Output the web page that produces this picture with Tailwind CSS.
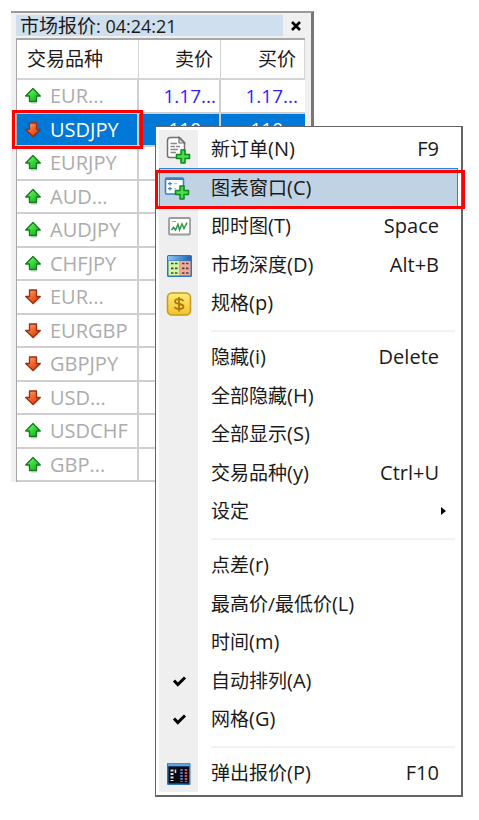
<!DOCTYPE html>
<html lang="zh-CN">
<head>
    <meta charset="UTF-8">
    <meta name="viewport" content="width=device-width, initial-scale=1.0">
    <title>市场报价</title>
    <script src="https://cdn.jsdelivr.net/npm/@tailwindcss/browser@4"></script>
</head>
<body class="relative min-h-screen bg-white font-['Open_Sans','Noto_Sans_CJK_SC',sans-serif] text-[19px] leading-6 text-[#1a1a1a]">
    <!-- 图标 -->
    <svg class="absolute size-0" aria-hidden="true">
        <defs>
            <linearGradient id="green" x1="0" y1="0" x2="1" y2="1">
                <stop offset="0" stop-color="#9df58c"/>
                <stop offset="0.5" stop-color="#35d63a"/>
                <stop offset="1" stop-color="#0fa51c"/>
            </linearGradient>
            <linearGradient id="red" x1="0" y1="0" x2="1" y2="1">
                <stop offset="0" stop-color="#ffb28a"/>
                <stop offset="0.5" stop-color="#f4602a"/>
                <stop offset="1" stop-color="#c93a0c"/>
            </linearGradient>
            <linearGradient id="gold" x1="0" y1="0" x2="0" y2="1">
                <stop offset="0" stop-color="#ffec78"/>
                <stop offset="1" stop-color="#f2c230"/>
            </linearGradient>
            <linearGradient id="blue" x1="0" y1="0" x2="1" y2="0">
                <stop offset="0" stop-color="#8cc4f0"/>
                <stop offset="1" stop-color="#1c62ae"/>
            </linearGradient>
        </defs>
        <symbol id="up" viewBox="0 0 18 18">
            <path d="M3 11 9.800 4 17 11.500H13V17H7V12Z" fill="#000" opacity=".12"/>
            <path d="M9 1.500 16.300 9H12.500V14.500H5.500V9H1.700Z" fill="url(#green)" stroke="#167a1c" stroke-width="1.300" stroke-linejoin="round"/>
        </symbol>
        <symbol id="down" viewBox="0 0 18 18">
            <path d="M7 4H13V9H17L10 17 4 10Z" fill="#000" opacity=".12"/>
            <path d="M9 15.500 1.700 8.500H5.500V2H12.500V8.500H16.300Z" fill="url(#red)" stroke="#96300f" stroke-width="1.300" stroke-linejoin="round"/>
        </symbol>
        <symbol id="plus" viewBox="0 0 14 14">
            <path d="M5 1H9V5H13V9H9V13H5V9H1V5H5Z" fill="#43e04a" stroke="#11861b" stroke-width="1.500" stroke-linejoin="round"/>
        </symbol>
        <symbol id="check" viewBox="0 0 30 30">
            <path d="M10 14.500 13.800 18.500 21 11.500" fill="none" stroke="#000" stroke-width="3"/>
        </symbol>
    </svg>

    <!-- 市场报价 -->
    <section class="mr-[165px] ml-[11px] pt-[11px]">
        <div class="border-t-2 border-r-3 border-t-[#9a9a9a] border-r-[#777] bg-[#f0f0f0] pt-[2px] pr-[6px]">
            <header class="ml-[5px] flex h-[23px] items-start">
                <h1 class="h-[21px] grow bg-[#d0dfee] pl-1 text-lg leading-[22px]"><span class="text-[19px]">市场报价</span>: 04:24:21</h1>
                <button class="flex h-[21px] w-[22px] items-center justify-end pr-1" aria-label="关闭">
                    <svg class="size-[10px]" viewBox="0 0 10 10"><path d="M1 1 9 9M9 1 1 9" stroke="#000" stroke-width="2.600"/></svg>
                </button>
            </header>
            <table class="ml-[5px] w-[calc(100%-5px)] table-fixed border-separate border-spacing-0 border-t-2 border-l-1 border-[#a8a8a8] bg-white">
                <thead>
                    <tr class="h-[40px] *:border-r *:border-b-2 *:border-[#d4d4d4] *:p-0 *:font-normal">
                        <th class="w-[122px] text-left"><span class="pl-[10px]">交易品种</span></th>
                        <th class="w-[82px] text-right"><span class="pr-[7px]">卖价</span></th>
                        <th class="text-right"><span class="pr-2">买价</span></th>
                    </tr>
                </thead>
                <tbody class="text-xl text-[#acacac] *:odd:h-[34px] *:even:h-[33px] [&_td]:border-r-2 [&_td]:border-b-2 [&_td]:border-[#cfcfcf] [&_td]:p-0 [&_td:last-child]:border-r-0">
                    <tr>
                        <td><div class="flex items-center gap-2 pl-[7px]"><svg class="size-[18px]"><use href="#up"/></svg>EUR...</div></td>
                        <td class="text-right text-[19px] font-medium text-[#2d1fff]"><span class="pr-[3px]">1.17...</span></td>
                        <td class="text-right text-[19px] font-medium text-[#2d1fff]"><span class="pr-[7px]">1.17...</span></td>
                    </tr>
                    <tr class="bg-[#0078d7] text-white">
                        <td><div class="flex items-center gap-2 pl-[7px]"><svg class="size-[18px]"><use href="#down"/></svg>USDJPY</div></td>
                        <td class="text-right text-[19px] font-medium"><span class="pr-[3px]">110...</span></td>
                        <td class="text-right text-[19px] font-medium"><span class="pr-[7px]">110...</span></td>
                    </tr>
                    <tr>
                        <td><div class="flex items-center gap-2 pl-[7px]"><svg class="size-[18px]"><use href="#up"/></svg>EURJPY</div></td>
                        <td></td>
                        <td></td>
                    </tr>
                    <tr>
                        <td><div class="flex items-center gap-2 pl-[7px]"><svg class="size-[18px]"><use href="#up"/></svg>AUD...</div></td>
                        <td></td>
                        <td></td>
                    </tr>
                    <tr>
                        <td><div class="flex items-center gap-2 pl-[7px]"><svg class="size-[18px]"><use href="#up"/></svg>AUDJPY</div></td>
                        <td></td>
                        <td></td>
                    </tr>
                    <tr>
                        <td><div class="flex items-center gap-2 pl-[7px]"><svg class="size-[18px]"><use href="#up"/></svg>CHFJPY</div></td>
                        <td></td>
                        <td></td>
                    </tr>
                    <tr>
                        <td><div class="flex items-center gap-2 pl-[7px]"><svg class="size-[18px]"><use href="#down"/></svg>EUR...</div></td>
                        <td></td>
                        <td></td>
                    </tr>
                    <tr>
                        <td><div class="flex items-center gap-2 pl-[7px]"><svg class="size-[18px]"><use href="#down"/></svg>EURGBP</div></td>
                        <td></td>
                        <td></td>
                    </tr>
                    <tr>
                        <td><div class="flex items-center gap-2 pl-[7px]"><svg class="size-[18px]"><use href="#down"/></svg>GBPJPY</div></td>
                        <td></td>
                        <td></td>
                    </tr>
                    <tr>
                        <td><div class="flex items-center gap-2 pl-[7px]"><svg class="size-[18px]"><use href="#down"/></svg>USD...</div></td>
                        <td></td>
                        <td></td>
                    </tr>
                    <tr>
                        <td><div class="flex items-center gap-2 pl-[7px]"><svg class="size-[18px]"><use href="#up"/></svg>USDCHF</div></td>
                        <td></td>
                        <td></td>
                    </tr>
                    <tr>
                        <td><div class="flex items-center gap-2 pl-[7px]"><svg class="size-[18px]"><use href="#up"/></svg>GBP...</div></td>
                        <td></td>
                        <td></td>
                    </tr>
                </tbody>
            </table>
        </div>
    </section>

    <!-- 右键菜单 -->
    <div class="absolute top-[126px] right-4 left-[155px] border-t border-r-2 border-b-2 border-l border-[#646464] bg-white p-[3px]">
        <div role="menu" class="bg-[linear-gradient(to_right,#efefef_39px,#fff_39px)] [&_button]:flex [&_button]:w-full [&_button]:items-center [&_button]:pr-[19px] [&_button]:pl-[5px] [&_button]:text-left [&_svg]:mr-[17px] [&_svg]:size-[30px] [&_svg]:shrink-0 [&_kbd]:ml-auto [&_kbd]:font-[inherit] [&_kbd]:text-xl [&_small]:text-xl">
            <div class="*:odd:h-[38px] *:even:h-[39px]">
                <button role="menuitem">
                    <svg viewBox="0 0 30 30">
                        <path d="M6.500 3.500H15.500L20.500 8.500V23.500H5.500A2 2 0 0 1 3.500 21.500V6.500A3 3 0 0 1 6.500 3.500Z" fill="#fff" stroke="#707070" stroke-width="1.500"/>
                        <path d="M15 3.500V9H20.500Z" fill="#ddd" stroke="#707070" stroke-width="1.200"/>
                        <path d="M6.500 9.500H13M6.500 12.500H11M12 12.500H16M6.500 15.500H14M6.500 18.500H12" stroke="#8a8a8a" stroke-width="1.300"/>
                        <path d="M17 16H21V20.500H25.500V24.500H21V29H17V24.500H12.500V20.500H17Z" fill="#43e04a" stroke="#11861b" stroke-width="1.500" stroke-linejoin="round"/>
                    </svg>
                    <span>新订单<small>(N)</small></span><kbd>F9</kbd>
                </button>
                <button role="menuitem" class="bg-[#bfd3e4] ring-1 ring-[#2a88d8] ring-inset">
                    <svg viewBox="0 0 30 30">
                        <rect x="1.500" y="5" width="18" height="16" rx="1.500" fill="#fff" stroke="#3b7fc4" stroke-width="1.600"/>
                        <path d="M2 6H19" stroke="#3b7fc4" stroke-width="2"/>
                        <path d="M6 9V12.500M4 10.700H8M6 14V17.500M4 15.700H8" stroke="#5a7fae" stroke-width="1.300"/>
                        <path d="M10 10.700H13M10 15.700H12" stroke="#9db4cc" stroke-width="1"/>
                        <path d="M16 13H20V17.500H24.500V21.500H20V26H16V21.500H11.500V17.500H16Z" fill="#43e04a" stroke="#11861b" stroke-width="1.500" stroke-linejoin="round"/>
                    </svg>
                    <span>图表窗口<small>(C)</small></span>
                </button>
                <button role="menuitem">
                    <svg viewBox="0 0 30 30">
                        <rect x="5" y="7" width="21" height="16.500" rx="1" fill="#fff" stroke="#9b9b9b" stroke-width="1.800"/>
                        <path d="M8 10.500H12" stroke="#aaa" stroke-width="1"/>
                        <path d="M7.500 19 9.500 16.500 11.500 19 14 13.500 15.500 19 18 13 20 17.500 23 11.500" fill="none" stroke="#2f9a43" stroke-width="1.500"/>
                    </svg>
                    <span>即时图<small>(T)</small></span><kbd>Space</kbd>
                </button>
                <button role="menuitem">
                    <svg viewBox="0 0 30 30">
                        <rect x="3" y="5" width="25" height="22" rx="1.500" fill="#2878be"/>
                        <rect x="4" y="6" width="23" height="4.500" fill="url(#blue)"/>
                        <rect x="4.500" y="11" width="11" height="14.500" fill="#d7f5a0"/>
                        <rect x="15.500" y="11" width="11" height="14.500" fill="#f6a79a"/>
                        <path d="M7 13.500H13.500M7 18.300H13.500M7 23H13.500M18 13.500H24.500M18 18.300H24.500M18 23H24.500" stroke="#454b3a" stroke-width="1.700" stroke-dasharray="2.500 1.500"/>
                    </svg>
                    <span>市场深度<small>(D)</small></span><kbd>Alt+B</kbd>
                </button>
                <button role="menuitem">
                    <svg viewBox="0 0 30 30">
                        <rect x="3.500" y="5" width="23" height="22" rx="4.500" fill="url(#gold)" stroke="#c99a18" stroke-width="1.600"/>
                        <path d="M19.500 13C18.500 11.500 16.800 11.200 15 11.200C12.500 11.200 11 12 11 13.500C11 17 19.500 15 19.500 18.500C19.500 20.200 17.500 21 15 21C12.800 21 11.300 20.300 10.500 19M15 9V23.500" fill="none" stroke="#a97908" stroke-width="1.800"/>
                    </svg>
                    <span>规格<small>(p)</small></span>
                </button>
            </div>
            <hr class="mt-2 mr-[3px] mb-[6px] ml-[52px] border-t-2 border-[#f1f1f1]">
            <div class="*:odd:h-[38px] *:even:h-[39px] [&_button]:pl-[52px]">
                <button role="menuitem"><span>隐藏<small>(i)</small></span><kbd>Delete</kbd></button>
                <button role="menuitem"><span>全部隐藏<small>(H)</small></span></button>
                <button role="menuitem"><span>全部显示<small>(S)</small></span></button>
                <button role="menuitem"><span>交易品种<small>(y)</small></span><kbd>Ctrl+U</kbd></button>
                <button role="menuitem" aria-haspopup="menu">
                    <span>设定</span>
                    <i class="-mr-[7px] ml-auto border-y-4 border-l-5 border-y-transparent border-l-black"></i>
                </button>
            </div>
            <hr class="mt-2 mr-[3px] mb-[6px] ml-[52px] border-t-2 border-[#f1f1f1]">
            <div class="*:odd:h-[38px] *:even:h-[39px]">
                <button role="menuitem"><span class="pl-[47px]">点差<small>(r)</small></span></button>
                <button role="menuitem"><span class="pl-[47px]">最高价/最低价<small>(L)</small></span></button>
                <button role="menuitem"><span class="pl-[47px]">时间<small>(m)</small></span></button>
                <button role="menuitemcheckbox" aria-checked="true"><svg><use href="#check"/></svg><span>自动排列<small>(A)</small></span></button>
                <button role="menuitemcheckbox" aria-checked="true"><svg><use href="#check"/></svg><span>网格<small>(G)</small></span></button>
            </div>
            <hr class="mt-2 mr-[3px] mb-[6px] ml-[52px] border-t-2 border-[#f1f1f1]">
            <button role="menuitem" class="h-[38px]">
                <svg viewBox="0 0 30 30">
                    <rect x="3" y="5" width="23.500" height="22" rx="1" fill="#2c78bd"/>
                    <rect x="4" y="5.500" width="21.500" height="2.500" fill="#5ba6e4"/>
                    <rect x="4.500" y="8.500" width="20.500" height="17" fill="#0a0a12"/>
                    <path d="M8 11.500V23" stroke="#ddd" stroke-width="3" stroke-dasharray="2 1.500"/>
                    <path d="M11.500 11.500V15" stroke="#ddd" stroke-width="1.500"/>
                    <path d="M17.500 11V24" stroke="#5577cc" stroke-width="2.500" stroke-dasharray="2 1"/>
                    <path d="M22 11V24" stroke="#cc5555" stroke-width="2.500" stroke-dasharray="2 1"/>
                </svg>
                <span>弹出报价<small>(P)</small></span><kbd>F10</kbd>
            </button>
        </div>
    </div>

    <!-- 红框标注 -->
    <div class="pointer-events-none absolute top-[110px] left-3 h-[39px] w-[131px] border-3 border-[#f00]"></div>
    <div class="pointer-events-none absolute top-[170px] right-[14px] left-[155px] h-[39px] border-3 border-[#f00]"></div>
</body>
</html>
